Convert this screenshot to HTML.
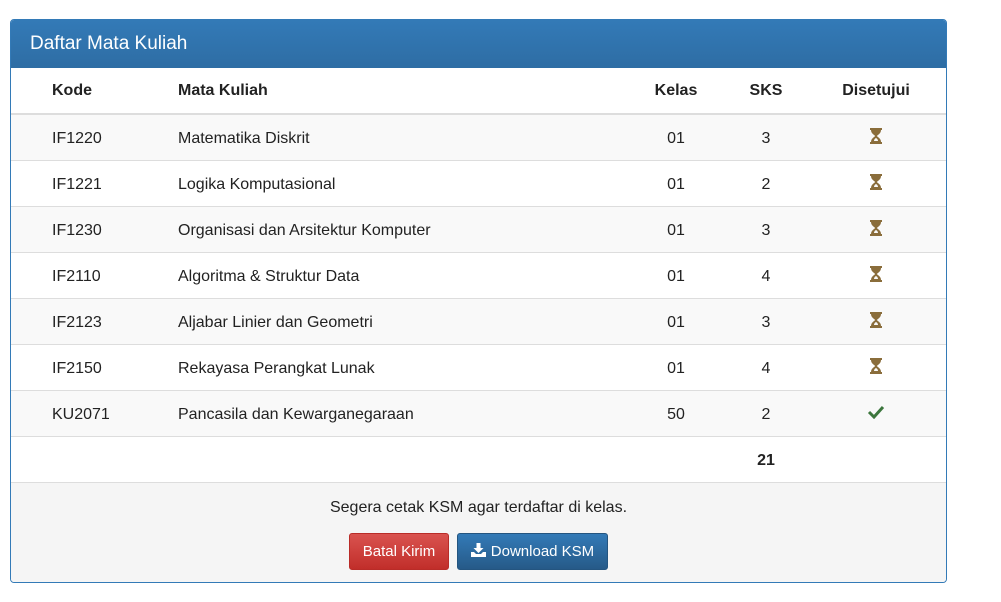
<!DOCTYPE html>
<html><head><meta charset="utf-8"><style>
body{margin:0;background:#fff;font-family:"Liberation Sans",sans-serif;color:#222;}
.panel{position:absolute;left:10px;top:19px;width:935px;height:562px;border:1px solid #337ab7;border-radius:4px;overflow:hidden;}
.head{height:48px;background:linear-gradient(#337ab7,#2e6da4);color:#fff;font-size:19px;line-height:48px;padding-left:19px;}
table{border-collapse:collapse;width:100%;font-size:16px;}
td,th{height:45px;padding:0;border-top:1px solid #ddd;}
td{padding-top:2px;height:43px;}
th{border-top:none;border-bottom:2px solid #ddd;height:45px;font-weight:bold;}
tbody tr:nth-child(odd) td{background:#f9f9f9;}
.c1{padding-left:41px;width:126px;text-align:left}
.c2{text-align:left}
.c3{text-align:center;width:100px}
.c4{text-align:center;width:80px}
.c5{text-align:center;width:140px}
.foot{background:#f5f5f5;border-top:1px solid #ddd;height:100px;text-align:center;font-size:16px;}
.btn{display:inline-block;vertical-align:top;box-sizing:border-box;color:#fff;font-size:15px;height:37px;line-height:35px;border-radius:3px;margin:0 4px;}
.red{width:100px;background:linear-gradient(#d9534f,#c12e2a);border:1px solid #b92c28;}
.blue{width:151px;background:linear-gradient(#337ab7,#265a88);border:1px solid #245580;}
</style></head><body>
<div class="panel">
<div class="head">Daftar Mata Kuliah</div>
<table>
<thead><tr><th class="c1">Kode</th><th class="c2">Mata Kuliah</th><th class="c3">Kelas</th><th class="c4">SKS</th><th class="c5">Disetujui</th></tr></thead>
<tbody>
<tr><td class="c1">IF1220</td><td class="c2">Matematika Diskrit</td><td class="c3">01</td><td class="c4">3</td><td class="c5">H</td></tr>
<tr><td class="c1">IF1221</td><td class="c2">Logika Komputasional</td><td class="c3">01</td><td class="c4">2</td><td class="c5">H</td></tr>
<tr><td class="c1">IF1230</td><td class="c2">Organisasi dan Arsitektur Komputer</td><td class="c3">01</td><td class="c4">3</td><td class="c5">H</td></tr>
<tr><td class="c1">IF2110</td><td class="c2">Algoritma &amp; Struktur Data</td><td class="c3">01</td><td class="c4">4</td><td class="c5">H</td></tr>
<tr><td class="c1">IF2123</td><td class="c2">Aljabar Linier dan Geometri</td><td class="c3">01</td><td class="c4">3</td><td class="c5">H</td></tr>
<tr><td class="c1">IF2150</td><td class="c2">Rekayasa Perangkat Lunak</td><td class="c3">01</td><td class="c4">4</td><td class="c5">H</td></tr>
<tr><td class="c1">KU2071</td><td class="c2">Pancasila dan Kewarganegaraan</td><td class="c3">50</td><td class="c4">2</td><td class="c5"><svg width="18" height="14" viewBox="0 0 18 14"><path d="M2 7l5 5L16 2" stroke="#3c763d" stroke-width="3" fill="none"/></svg></td></tr>
<tr><td style="background:#fff"></td><td style="background:#fff"></td><td style="background:#fff"></td><td class="c4" style="background:#fff;font-weight:bold">21</td><td style="background:#fff"></td></tr>
</tbody></table>
<div class="foot"><div style="padding-top:16px;height:34px;">Segera cetak KSM agar terdaftar di kelas.</div>
<span class="btn red">Batal Kirim</span><span class="btn blue"><svg width="15" height="14" viewBox="0 0 15 14" style="vertical-align:-1px;margin-right:5px"><path d="M5.5 0h4v5h3l-5 5-5-5h3z" fill="#fff"/><path d="M0 9h3l2 2h5l2-2h3v5H0z" fill="#fff"/></svg>Download KSM</span></div>
</div>
<script>
document.querySelectorAll('td.c5').forEach(function(t){if(t.textContent==='H')t.innerHTML='<svg width="14" height="18" viewBox="0 0 14 18"><path d="M1 1h12v2h-1c0 4-4 5-4 6 0 1 4 2 4 6h1v2H1v-2h1c0-4 4-5 4-6 0-1-4-2-4-6H1z" fill="#8a6d3b"/><path d="M5 14c0-2 2-3 2-3s2 1 2 3z" fill="#f9f9f9"/></svg>';});
</script>
</body></html>
